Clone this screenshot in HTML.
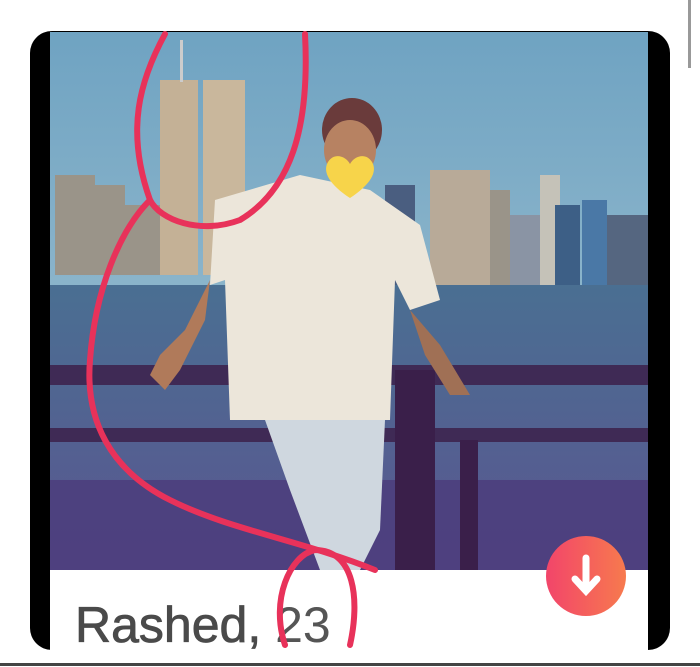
<!DOCTYPE html>
<html><head><style>
html,body{margin:0;padding:0;background:#fff;width:700px;height:667px;overflow:hidden}
</style></head><body>
<svg width="700" height="667" viewBox="0 0 700 667" xmlns="http://www.w3.org/2000/svg" style="position:absolute;left:0;top:0">
<defs>
<linearGradient id="sky" x1="0" y1="0" x2="0" y2="1"><stop offset="0" stop-color="#6fa3c2"/><stop offset="1" stop-color="#a9c7d4"/></linearGradient>
<linearGradient id="water" x1="0" y1="0" x2="0" y2="1"><stop offset="0" stop-color="#4a6f92"/><stop offset="1" stop-color="#5a5590"/></linearGradient>
<linearGradient id="btn" x1="0" y1="0" x2="1" y2="0"><stop offset="0" stop-color="#f2456a"/><stop offset="1" stop-color="#f77a4e"/></linearGradient>
<clipPath id="ph"><rect x="50" y="32" width="598" height="538"/></clipPath>
</defs>
<rect x="688" y="0" width="3" height="68" fill="#999"/>
<rect x="30" y="31" width="640" height="619" rx="22" fill="#000"/>
<g clip-path="url(#ph)">
<rect x="50" y="32" width="598" height="538" fill="url(#sky)"/>
<g fill="#9a9489">
<rect x="55" y="175" width="40" height="100"/><rect x="95" y="185" width="30" height="90"/><rect x="125" y="205" width="35" height="70"/>
<rect x="160" y="80" width="38" height="195" fill="#c4b196"/><rect x="203" y="80" width="42" height="195" fill="#c9b79c"/>
<rect x="180" y="40" width="3" height="42" fill="#ccc"/>
<rect x="430" y="170" width="60" height="115" fill="#b8aa98"/><rect x="490" y="190" width="20" height="95"/>
<rect x="510" y="215" width="45" height="70" fill="#8a94a4"/><rect x="540" y="175" width="20" height="110" fill="#c5c2b8"/>
<rect x="555" y="205" width="25" height="80" fill="#3d5f86"/><rect x="582" y="200" width="25" height="85" fill="#4a78a6"/>
<rect x="607" y="215" width="41" height="70" fill="#556680"/><rect x="385" y="185" width="30" height="100" fill="#4a5e80"/>
</g>
<rect x="50" y="285" width="598" height="285" fill="url(#water)"/>
<rect x="50" y="365" width="598" height="20" fill="#3f2a55"/>
<rect x="50" y="428" width="598" height="14" fill="#3f2a55"/>
<rect x="50" y="480" width="598" height="90" fill="#4b3b7a" opacity="0.8"/>
<rect x="395" y="370" width="40" height="200" fill="#3a1f4a"/>
<rect x="460" y="440" width="18" height="130" fill="#3a1f4a"/>
<path d="M215 200 L300 175 L370 190 L420 225 L440 300 L410 310 L395 280 L390 420 L230 420 L225 280 L210 285 Z" fill="#ece6da"/>
<path d="M210 280 L185 330 L160 355 L150 375 L165 390 L180 370 L205 320 Z" fill="#b07a5a"/>
<path d="M410 310 L440 345 L455 370 L470 395 L450 395 L425 355 Z" fill="#a07055"/>
<path d="M265 420 L385 420 L380 530 L360 570 L320 570 L290 490 Z" fill="#cfd7df"/>
<ellipse cx="352" cy="130" rx="30" ry="32" fill="#6a3b3b"/>
<ellipse cx="350" cy="150" rx="26" ry="30" fill="#b78262"/>
<path d="M350 198 C330 185 322 172 328 162 C334 152 346 156 350 164 C354 156 366 152 372 162 C378 172 370 185 350 198Z" fill="#f7d44a"/>
</g>
<rect x="50" y="570" width="598" height="80" fill="#fff"/>
<text x="75" y="642" font-family="Liberation Sans, sans-serif" font-size="50" fill="#4a4a4a" stroke="#4a4a4a" stroke-width="0.8">Rashed, <tspan stroke="none" fill="#555">23</tspan></text>
<circle cx="586" cy="576" r="40" fill="url(#btn)"/>
<path d="M586 558 L586 588 M575 579 L586 591 L597 579" stroke="#fff" stroke-width="7" fill="none" stroke-linecap="round"/>
<g fill="none" stroke="#e8325a" stroke-width="6" stroke-linecap="round">
<path d="M165 34 C140 80 125 130 150 200 C160 220 200 235 240 220 C290 190 310 130 305 34"/>
<path d="M150 200 C120 230 95 290 90 360 C85 420 110 470 170 500 C230 530 300 540 375 570"/>
<path d="M285 645 C270 600 290 555 315 550 C355 550 360 600 350 645"/>
</g>
<rect x="0" y="663" width="700" height="3" fill="#444"/>
</svg>
</body></html>
